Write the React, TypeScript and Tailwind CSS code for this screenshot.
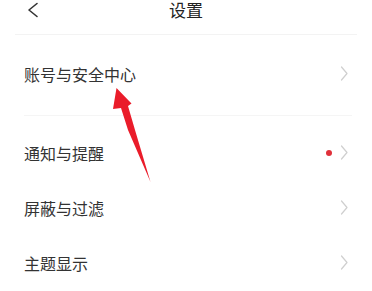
import React from "react";

const Chevron = () => (
  <svg width="8" height="15" viewBox="0 0 8 15" className="block">
    <polyline points="1.5,1 7,7.5 1.5,14" fill="none" stroke="#cfcfcf" strokeWidth="1.2" strokeLinecap="round" strokeLinejoin="round" />
  </svg>
);

const Row = ({ label, dot, h }: { label: string; dot?: boolean; h: string }) => (
  <div className={`flex items-center justify-between pl-[24px] pr-[24px] ${h}`}>
    <span className="text-[16px] leading-none text-[#333333]">{label}</span>
    <div className="flex items-center gap-[8px]">
      {dot && <span className="block w-[6px] h-[6px] rounded-full bg-[#e0303a]" />}
      <Chevron />
    </div>
  </div>
);

export default function App() {
  return (
    <div
      className="relative w-[372px] h-[291px] overflow-hidden bg-white"
      style={{ fontFamily: '"Noto Sans CJK SC", "Noto Sans", sans-serif' }}
    >
      <div className="relative h-[34px] flex justify-center">
        <svg width="12" height="16" viewBox="0 0 12 16" className="absolute left-[27px] top-[2px]">
          <polyline points="10,1.5 2,8 10,14.5" fill="none" stroke="#333333" strokeWidth="1.6" strokeLinecap="round" strokeLinejoin="round" />
        </svg>
        <span className="text-[17px] leading-none pt-[1px] text-[#222222]">设置</span>
      </div>
      <div className="mx-[15px] h-[1px] bg-[#f3f3f3]" />
      <Row label="账号与安全中心" h="h-[77px]" />
      <div className="ml-[24px] mr-[20px] mt-[3px] h-[1px] bg-[#f5f5f5]" />
      <div className="h-[9px]" />
      <Row label="通知与提醒" dot h="h-[55px]" />
      <Row label="屏蔽与过滤" h="h-[55px]" />
      <Row label="主题显示" h="h-[55px]" />
      <svg className="absolute left-0 top-0 pointer-events-none" width="372" height="291" viewBox="0 0 372 291">
        <polygon
          points="116.5,88 131.5,103.5 128,106 135,130 150.5,182 128,130 121,108 113,109"
          fill="#ea1c2a"
        />
      </svg>
    </div>
  );
}
